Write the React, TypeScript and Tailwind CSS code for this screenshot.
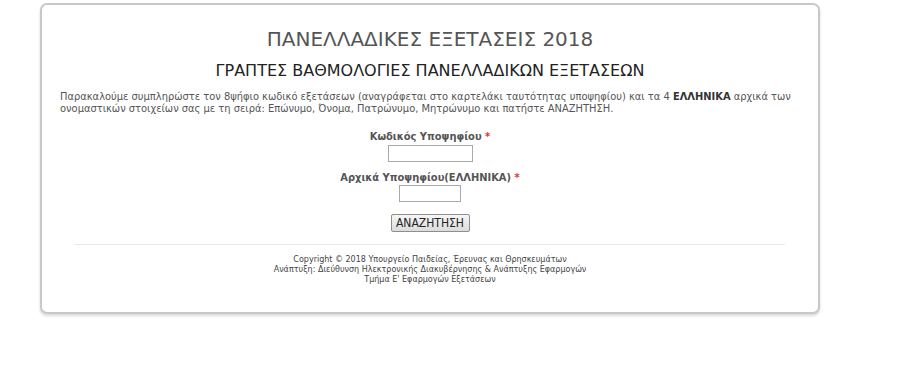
import React from 'react'

const font = { fontFamily: '"DejaVu Sans", Verdana, sans-serif' }
const narrow = { fontFamily: '"DejaVu Sans Condensed", "DejaVu Sans", Tahoma, sans-serif' }

export default function App() {
  return (
    <div className="w-[900px] h-[382px] bg-white" style={font}>
      <div className="ml-[40px] mt-[3px] w-[780px] h-[311px] border-2 border-[#c6c8c9] rounded-[7px] shadow-[0_2px_3px_rgba(0,0,0,0.15)] bg-white">
        {/* επικεφαλίδα */}
        <h1 className="pt-[22px] text-center text-[20px] leading-[24px] text-[#555] font-normal">
          ΠΑΝΕΛΛΑΔΙΚΕΣ ΕΞΕΤΑΣΕΙΣ 2018
        </h1>
        <h2 className="mt-[10px] text-center text-[16px] leading-[19px] text-[#222] font-normal">
          ΓΡΑΠΤΕΣ ΒΑΘΜΟΛΟΓΙΕΣ ΠΑΝΕΛΛΑΔΙΚΩΝ ΕΞΕΤΑΣΕΩΝ
        </h2>
        <p className="mt-[11px] px-[18px] text-[11px] leading-[12px] text-[#555]" style={narrow}>
          Παρακαλούμε συμπληρώστε τον 8ψήφιο κωδικό εξετάσεων (αναγράφεται στο καρτελάκι ταυτότητας υποψηφίου) και τα 4{' '}
          <b className="text-[#333]">ΕΛΛΗΝΙΚΑ</b> αρχικά των ονομαστικών στοιχείων σας με τη σειρά: Επώνυμο, Όνομα,
          Πατρώνυμο, Μητρώνυμο και πατήστε ΑΝΑΖΗΤΗΣΗ.
        </p>

        {/* φόρμα */}
        <form className="flex flex-col items-center" style={narrow} onSubmit={(e) => e.preventDefault()}>
          <label className="mt-[15px] text-[11px] leading-[14px] font-bold text-[#555]">
            Κωδικός Υποψηφίου <span className="text-[#d33]">*</span>
          </label>
          <input type="text" className="mt-[1px] w-[85px] h-[17px] border border-[#a9a9a9] bg-white" />
          <label className="mt-[9px] text-[11px] leading-[14px] font-bold text-[#555]">
            Αρχικά Υποψηφίου(ΕΛΛΗΝΙΚΑ) <span className="text-[#d33]">*</span>
          </label>
          <input type="text" className="w-[62px] h-[17px] border border-[#a9a9a9] bg-white" />
          <button
            type="submit"
            className="mt-[12px] w-[79px] h-[18px] border border-[#8e8e8e] rounded-[2px] bg-gradient-to-b from-[#f6f6f6] to-[#dcdcdc] text-[12px] leading-[15px] text-[#222]"
          >
            ΑΝΑΖΗΤΗΣΗ
          </button>
        </form>

        <hr className="mt-[12px] mx-[33px] border-0 border-t border-[#e2eaef]" />

        <div className="mt-[10px] text-center text-[8px] leading-[10px] text-[#444]">
          <p>Copyright © 2018 Υπουργείο Παιδείας, Έρευνας και Θρησκευμάτων</p>
          <p>Ανάπτυξη: Διεύθυνση Ηλεκτρονικής Διακυβέρνησης &amp; Ανάπτυξης Εφαρμογών</p>
          <p>Τμήμα Ε' Εφαρμογών Εξετάσεων</p>
        </div>
      </div>
    </div>
  )
}
